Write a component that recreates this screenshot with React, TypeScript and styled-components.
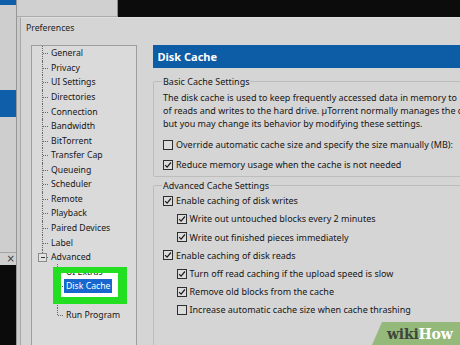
import React from "react";
import styled, { createGlobalStyle } from "styled-components";

const GlobalStyle = createGlobalStyle`
  html, body { margin: 0; padding: 0; background: #d4d4d4; }
  body { width: 460px; height: 345px; overflow: hidden; font-family: "Noto Sans", "Open Sans", sans-serif; color: #161616; }
  #root { width: 460px; height: 345px; }
`;

const Screen = styled.div`
  position: relative;
  width: 460px;
  height: 345px;
  overflow: hidden;
  display: flex;
  background: #d4d4d4;
`;

const LeftStrip = styled.div`
  width: 16px;
  flex: none;
  display: flex;
  flex-direction: column;
  border-right: 1px solid #979797;
  background: #cecece;
`;

const StripBlock = styled.div<{ $h?: number; $tone: "blue" | "gray" | "black" }>`
  flex: ${(p) => (p.$h ? `0 0 ${p.$h}px` : "1 1 auto")};
  background: ${(p) => (p.$tone === "blue" ? "#0f5ea9" : p.$tone === "black" ? "#0b0b0b" : "#cecece")};
`;

const CloseRow = styled.div`
  flex: 0 0 13px;
  box-sizing: border-box;
  border-top: 1px solid #a3a3a3;
  display: flex;
  align-items: center;
  justify-content: flex-end;
  padding-right: 1px;
  font-family: "DejaVu Sans", sans-serif;
  font-size: 10px;
  line-height: 1;
  color: #3a3a3a;
`;

const Main = styled.div`
  flex: 1;
  display: flex;
  flex-direction: column;
  min-width: 0;
`;

const TopBar = styled.div`
  flex: 0 0 17px;
  display: flex;
`;

const BackWindow = styled.div`
  width: 101px;
  box-sizing: border-box;
  background: #d0d0d0;
  border-right: 1px solid #8e8e8e;
  border-bottom: 1px solid #ababab;
`;

const BlackArea = styled.div`
  flex: 1;
  background: #0c0c0c;
`;

const DialogRow = styled.div`
  flex: 1;
  display: flex;
  min-height: 0;
`;

const Spacer = styled.div`
  width: 3px;
  flex: none;
  background: #cbcbcb;
`;

const Dialog = styled.div`
  flex: 1;
  display: flex;
  flex-direction: column;
  background: #d5d5d5;
  border-left: 1px solid #a6a6a6;
  border-top: 1px solid #e0e0e0;
  min-width: 0;
`;

const Title = styled.div`
  flex: 0 0 27px;
  box-sizing: border-box;
  padding: 4px 0 0 5px;
  font-size: 8.7px;
  line-height: 13px;
  color: #1e1e1e;
`;

const Body = styled.div`
  display: flex;
  gap: 15.5px;
  padding-left: 10px;
  align-items: flex-start;
`;

const Tree = styled.div`
  position: relative;
  width: 106px;
  height: 320px;
  flex: none;
  box-sizing: border-box;
  border: 1px solid #9d9d9d;
  background: #dadada;
`;

const RowWrap = styled.div`
  display: flex;
  align-items: center;
  height: 14.57px;
  position: relative;
`;

const Branch = styled.div<{ $level: number; $last?: boolean }>`
  position: relative;
  flex: none;
  align-self: stretch;
  width: ${(p) => (p.$level ? 32 : 17)}px;
  &::before {
    content: "";
    position: absolute;
    left: ${(p) => (p.$level ? 25 : 10)}px;
    top: 0;
    height: ${(p) => (p.$last ? "50%" : "100%")};
    border-left: 1px dotted #666;
  }
  &::after {
    content: "";
    position: absolute;
    left: ${(p) => (p.$level ? 26 : 11)}px;
    right: 1px;
    top: 50%;
    border-top: 1px dotted #666;
  }
`;

const Expander = styled.span`
  position: absolute;
  left: 6px;
  top: 50%;
  width: 9px;
  height: 9px;
  margin-top: -4.5px;
  box-sizing: border-box;
  border: 1px solid #8a8a8a;
  background: #e2e2e2;
  z-index: 1;
  &::after {
    content: "";
    position: absolute;
    left: 1.5px;
    right: 1.5px;
    top: 3px;
    border-top: 1px solid #333;
  }
`;

const Label = styled.span<{ $selected?: boolean }>`
  padding: 0 2px;
  font-size: 8.7px;
  line-height: 14px;
  white-space: nowrap;
  color: ${(p) => (p.$selected ? "#fff" : "#161616")};
  background: ${(p) => (p.$selected ? "#1767cf" : "transparent")};
`;

const Spotlight = styled.div`
  position: absolute;
  left: 21px;
  top: 220.7px;
  width: 57px;
  height: 24px;
  border-style: solid;
  border-color: #22df22;
  border-width: 6px 9px 7px 8px;
  background: #ffffff;
  overflow: hidden;
  z-index: 2;
`;

const SpotlightInner = styled.div`
  margin: -8.15px 0 0 -29px;
  width: 104px;
`;

const RightPanel = styled.div`
  width: 320px;
  flex: none;
  display: flex;
  flex-direction: column;
`;

const Header = styled.div`
  height: 23px;
  display: flex;
  align-items: center;
  padding-left: 5px;
  background: #0d5ca6;
  color: #fff;
  font-weight: 700;
  font-size: 11px;
`;

const Group = styled.fieldset<{ $mt: number; $pt: number }>`
  margin: ${(p) => p.$mt}px 0 0 0.5px;
  padding: ${(p) => p.$pt}px 0 1.7px 9px;
  border: 1px solid #bdbdbd;
  border-radius: 2px;
  min-width: 0;
`;

const Legend = styled.legend`
  padding: 0 1px;
  margin-left: -1px;
  font-size: 9px;
  line-height: 13px;
  color: #161616;
`;

const Desc = styled.div`
  font-size: 9px;
  line-height: 13px;
  white-space: nowrap;
  margin-bottom: 4.5px;
`;

const CheckRow = styled.div<{ $h: number; $level: number }>`
  display: flex;
  align-items: center;
  gap: 3px;
  height: ${(p) => p.$h}px;
  padding-left: ${(p) => p.$level * 13.5}px;
  font-size: 9px;
  white-space: nowrap;
`;

const Box = styled.span`
  width: 10px;
  height: 10px;
  flex: none;
  box-sizing: border-box;
  border: 1px solid #2e2e2e;
  background: #dcdcdc;
  display: flex;
  align-items: center;
  justify-content: center;
`;

const Watermark = styled.div`
  position: absolute;
  right: 0;
  bottom: 0;
  width: 88px;
  height: 23px;
  box-sizing: border-box;
  padding-left: 15px;
  display: flex;
  align-items: center;
  background: #94b97b;
  clip-path: polygon(10px 0, 100% 0, 100% 100%, 0 100%);
  font-family: "DejaVu Serif", serif;
  font-weight: 700;
  font-size: 14px;
  letter-spacing: -0.2px;
`;

const Wiki = styled.span`
  color: #3f463a;
`;

const How = styled.span`
  color: #ffffff;
`;

type Item = { label: string; level: number; last?: boolean; expander?: boolean; selected?: boolean };

const items: Item[] = [
  { label: "General", level: 0 },
  { label: "Privacy", level: 0 },
  { label: "UI Settings", level: 0 },
  { label: "Directories", level: 0 },
  { label: "Connection", level: 0 },
  { label: "Bandwidth", level: 0 },
  { label: "BitTorrent", level: 0 },
  { label: "Transfer Cap", level: 0 },
  { label: "Queueing", level: 0 },
  { label: "Scheduler", level: 0 },
  { label: "Remote", level: 0 },
  { label: "Playback", level: 0 },
  { label: "Paired Devices", level: 0 },
  { label: "Label", level: 0 },
  { label: "Advanced", level: 0, last: true, expander: true },
  { label: "UI Extras", level: 1 },
  { label: "Disk Cache", level: 1, selected: true },
  { label: "WebUI", level: 1 },
  { label: "Run Program", level: 1, last: true },
];

const TreeRow: React.FC<{ item: Item }> = ({ item }) => (
  <RowWrap>
    <Branch $level={item.level} $last={item.last}>
      {item.expander && <Expander />}
    </Branch>
    <Label $selected={item.selected}>{item.label}</Label>
  </RowWrap>
);

const CheckMark = () => (
  <svg width="8" height="8" viewBox="0 0 8 8">
    <path d="M1.1 4.1 L3.1 6.2 L6.9 1.5" fill="none" stroke="#1b1b1b" strokeWidth="1.2" />
  </svg>
);

const Check: React.FC<{ checked: boolean; level?: number; h: number; children: React.ReactNode }> = ({
  checked,
  level = 0,
  h,
  children,
}) => (
  <CheckRow $h={h} $level={level}>
    <Box>{checked && <CheckMark />}</Box>
    <span>{children}</span>
  </CheckRow>
);

export default function App() {
  return (
    <>
      <GlobalStyle />
      <Screen>
        <LeftStrip>
          <StripBlock $h={5} $tone="blue" />
          <StripBlock $h={85} $tone="gray" />
          <StripBlock $h={27} $tone="blue" />
          <StripBlock $h={135} $tone="gray" />
          <CloseRow>×</CloseRow>
          <StripBlock $tone="black" />
        </LeftStrip>
        <Main>
          <TopBar>
            <BackWindow />
            <BlackArea />
          </TopBar>
          <DialogRow>
            <Spacer />
            <Dialog>
              <Title>Preferences</Title>
              <Body>
                <Tree>
                  {items.map((it) => (
                    <TreeRow key={it.label} item={it} />
                  ))}
                  <Spotlight>
                    <SpotlightInner>
                      {items.slice(15, 18).map((it) => (
                        <TreeRow key={it.label} item={it} />
                      ))}
                    </SpotlightInner>
                  </Spotlight>
                </Tree>
                <RightPanel>
                  <Header>Disk Cache</Header>
                  <Group $mt={7} $pt={3}>
                    <Legend>Basic Cache Settings</Legend>
                    <Desc>
                      The disk cache is used to keep frequently accessed data in memory to
                      <br />
                      of reads and writes to the hard drive. µTorrent normally manages the c
                      <br />
                      but you may change its behavior by modifying these settings.
                    </Desc>
                    <Check checked={false} h={20}>
                      Override automatic cache size and specify the size manually (MB):
                    </Check>
                    <Check checked h={20}>
                      Reduce memory usage when the cache is not needed
                    </Check>
                  </Group>
                  <Group $mt={1.5} $pt={0}>
                    <Legend>Advanced Cache Settings</Legend>
                    <Check checked h={18.2}>Enable caching of disk writes</Check>
                    <Check checked level={1} h={18.2}>Write out untouched blocks every 2 minutes</Check>
                    <Check checked level={1} h={18.2}>Write out finished pieces immediately</Check>
                    <Check checked h={18.2}>Enable caching of disk reads</Check>
                    <Check checked level={1} h={18.2}>Turn off read caching if the upload speed is slow</Check>
                    <Check checked level={1} h={18.2}>Remove old blocks from the cache</Check>
                    <Check checked={false} level={1} h={18.2}>Increase automatic cache size when cache thrashing</Check>
                    <div style={{ height: 40 }} />
                  </Group>
                </RightPanel>
              </Body>
            </Dialog>
          </DialogRow>
        </Main>
        <Watermark>
          <Wiki>wiki</Wiki>
          <How>How</How>
        </Watermark>
      </Screen>
    </>
  );
}
